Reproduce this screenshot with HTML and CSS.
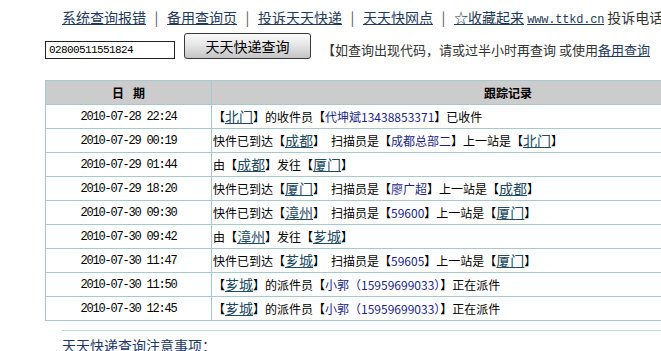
FILE: index.html
```html
<!DOCTYPE html>
<html lang="zh-CN">
<head>
    <meta charset="UTF-8">
    <title>天天快递查询</title>
    <link rel="stylesheet" href="styles.css">
</head>
<body>
    <div class="nav">
        <a href="#">系统查询报错</a><span class="sep">|</span><a href="#">备用查询页</a><span class="sep">|</span><a href="#">投诉天天快递</a><span class="sep">|</span><a href="#">天天快网点</a><span class="sep">|</span><a href="#">☆收藏起来</a> <a href="#" class="site">www.ttkd.cn</a> 投诉电话：4008-188-888
    </div>

    <form class="search" onsubmit="return false">
        <input type="text" class="code" value="02800511551824">
        <button type="submit" class="go">天天快递查询</button>
        <span class="note">【如查询出现代码，请或过半小时再查询 或使用<a href="#">备用查询</a></span>
    </form>

    <table class="track">
        <tr>
            <th class="date-head">日期</th>
            <th>跟踪记录</th>
        </tr>
        <tr>
            <td class="date">2010-07-28 22:24</td>
            <td>【<a href="#" class="place">北门</a>】的收件员【<span class="who">代坤斌13438853371</span>】已收件</td>
        </tr>
        <tr>
            <td class="date">2010-07-29 00:19</td>
            <td>快件已到达【<a href="#" class="place">成都</a>】&ensp;扫描员是【<span class="who">成都总部二</span>】上一站是【<a href="#" class="place">北门</a>】</td>
        </tr>
        <tr>
            <td class="date">2010-07-29 01:44</td>
            <td>由【<a href="#" class="place">成都</a>】发往【<a href="#" class="place">厦门</a>】</td>
        </tr>
        <tr>
            <td class="date">2010-07-29 18:20</td>
            <td>快件已到达【<a href="#" class="place">厦门</a>】&ensp;扫描员是【<span class="who">廖广超</span>】上一站是【<a href="#" class="place">成都</a>】</td>
        </tr>
        <tr>
            <td class="date">2010-07-30 09:30</td>
            <td>快件已到达【<a href="#" class="place">漳州</a>】&ensp;扫描员是【<span class="who">59600</span>】上一站是【<a href="#" class="place">厦门</a>】</td>
        </tr>
        <tr>
            <td class="date">2010-07-30 09:42</td>
            <td>由【<a href="#" class="place">漳州</a>】发往【<a href="#" class="place">芗城</a>】</td>
        </tr>
        <tr>
            <td class="date">2010-07-30 11:47</td>
            <td>快件已到达【<a href="#" class="place">芗城</a>】&ensp;扫描员是【<span class="who">59605</span>】上一站是【<a href="#" class="place">厦门</a>】</td>
        </tr>
        <tr>
            <td class="date">2010-07-30 11:50</td>
            <td>【<a href="#" class="place">芗城</a>】的派件员【<span class="who">小郭（15959699033）</span>】正在派件</td>
        </tr>
        <tr>
            <td class="date">2010-07-30 12:45</td>
            <td>【<a href="#" class="place">芗城</a>】的派件员【<span class="who">小郭（15959699033）</span>】正在派件</td>
        </tr>
    </table>

    <div class="notice">
        <h3>天天快递查询注意事项：</h3>
    </div>
</body>
</html>
```

FILE: styles.css
```css
html {
    overflow: hidden;
}

body {
    margin: 0;
    font-family: "Noto Sans CJK SC", sans-serif;
    font-size: 12px;
    color: #000;
    background-color: #fff;
    white-space: nowrap;
}

a {
    color: #1f3a5c;
}

.nav {
    height: 18px;
    padding: 8px 0 0 62px;
    line-height: 18px;
    font-size: 14px;
    color: #333;
}

.nav .sep {
    display: inline-block;
    width: 21px;
    text-align: center;
    color: #555;
}

.nav .site {
    font-family: "Liberation Mono", monospace;
    font-size: 12px;
    letter-spacing: -0.2px;
}

.search {
    display: flex;
    align-items: flex-end;
    margin: 7px 0 0 45px;
    height: 26px;
}

.code {
    box-sizing: border-box;
    width: 130px;
    height: 18px;
    margin: 0;
    padding: 0 3px;
    border: 1px solid #222;
    font-family: "Liberation Mono", monospace;
    font-size: 11px;
    letter-spacing: -0.6px;
    color: #000;
}

.go {
    box-sizing: border-box;
    width: 127px;
    height: 26px;
    margin: 0 0 0 9px;
    padding: 0;
    border: 1px solid #3a3a3a;
    border-radius: 3px;
    background: linear-gradient(#fafafa, #e6e6e6 45%, #c4c4c4);
    font-family: "Noto Sans CJK SC", sans-serif;
    font-size: 14px;
    line-height: 24px;
    color: #000;
}

.note {
    margin-left: 11px;
    font-size: 13px;
    line-height: 18px;
    color: #333;
}

.track {
    margin: 21px 0 0 45px;
    width: 760px;
    border-collapse: collapse;
    border: 1px solid #a6c8cf;
}

.track th,
.track td {
    height: 23px;
    padding: 0 1px;
    border: 1px solid #a6c8cf;
    line-height: 16px;
}

.track th {
    background-color: #cccccc;
    font-size: 12px;
    font-weight: bold;
    text-align: center;
}

.track .date-head {
    width: 163px;
    letter-spacing: 9px;
    text-indent: 9px;
}

.track td {
    text-align: left;
}

.track .date {
    text-align: center;
    font-family: "Liberation Mono", monospace;
    font-size: 12px;
    letter-spacing: -1.2px;
}

.place {
    font-size: 14px;
    color: #1c4a63;
}

.who {
    color: #1a1f8a;
}

.notice {
    margin: 9px 0 0 62px;
    border-top: 1px solid #c9d7dd;
}

.notice h3 {
    margin: 0;
    padding-top: 5px;
    font-size: 14px;
    font-weight: normal;
    line-height: 18px;
    color: #1c3566;
}
```
